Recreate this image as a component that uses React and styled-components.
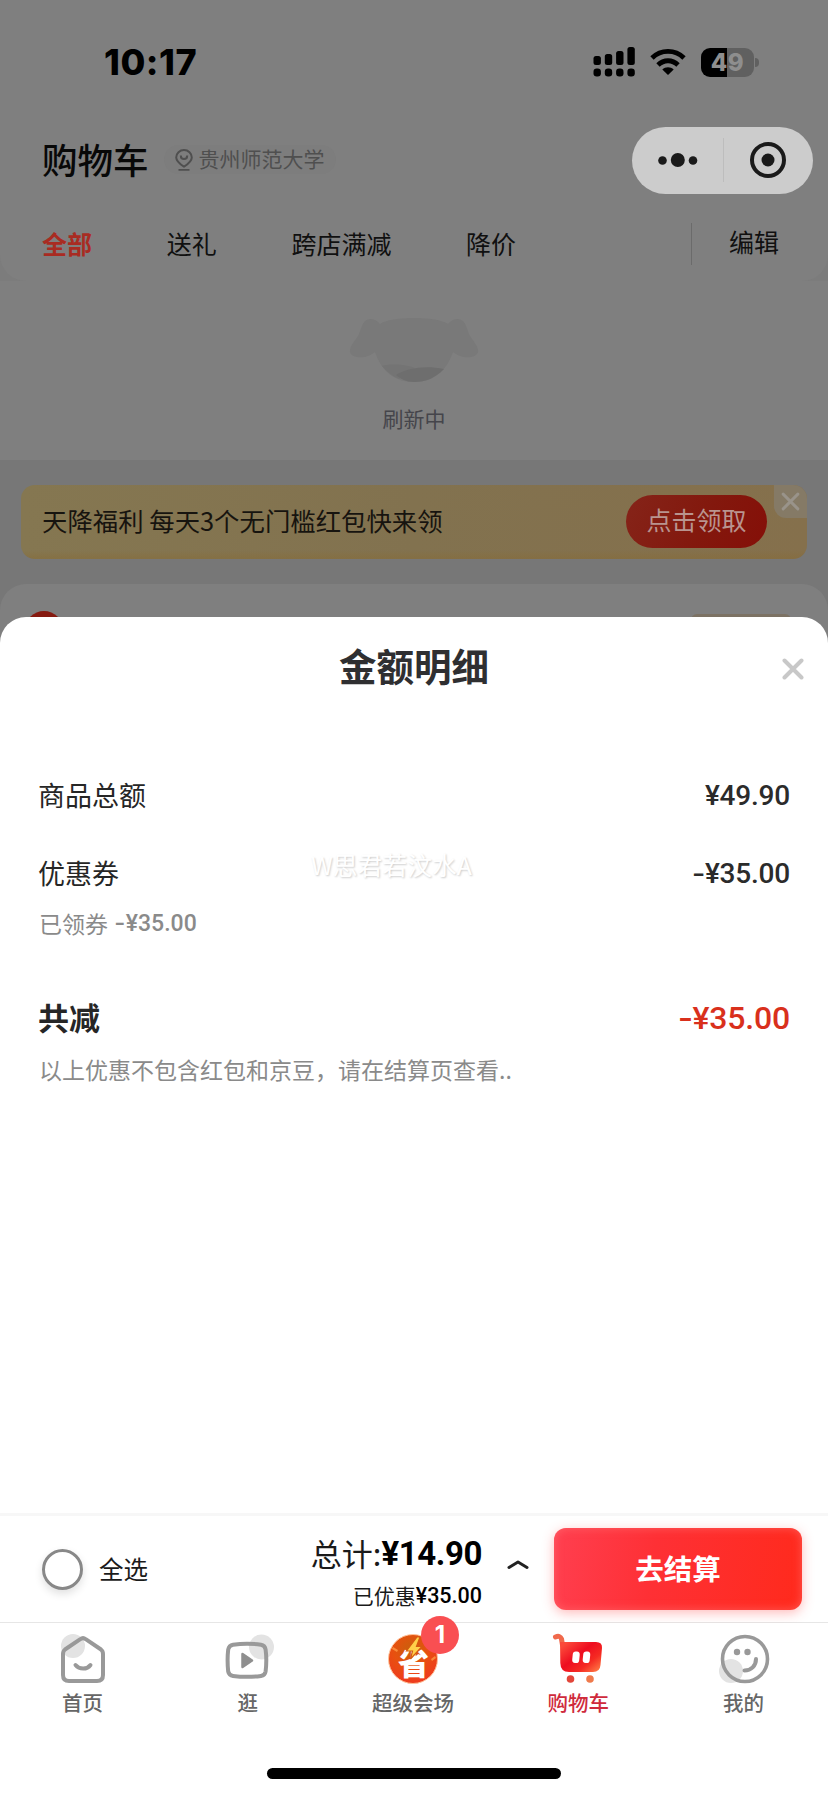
import React from "react";
import styled, { createGlobalStyle } from "styled-components";

const GlobalStyle = createGlobalStyle`
  * {
    box-sizing: border-box;
  }
  body {
    margin: 0;
    background: #fff;
    font-family: "Noto Sans CJK SC", sans-serif;
  }
`

const Screen = styled.div`
  width: 828px;
  height: 1796px;
  display: flex;
  flex-direction: column;
  overflow: hidden;
`

/* cart page behind the sheet, colours already dimmed */
const CartPage = styled.div`
  height: 650px;
  flex-shrink: 0;
  display: flex;
  flex-direction: column;
  background: #777;
`

const TopArea = styled.div`
  height: 460px;
  display: flex;
  flex-direction: column;
  background: #7f7f7f;
`

const StatusBar = styled.div`
  height: 127px;
  padding: 40px 69px 0 104px;
  display: flex;
  justify-content: space-between;
  align-items: flex-start;
`

const Time = styled.div`
  font-family: Inter, sans-serif;
  font-size: 36px;
  font-weight: 800;
  line-height: 44px;
  letter-spacing: 0.5px;
`

const StatusIcons = styled.div`
  height: 44px;
  display: flex;
  align-items: center;
  gap: 15px;
`

const Battery = styled.div`
  display: flex;
  align-items: center;
  gap: 1px;
`

const BatteryBody = styled.div`
  width: 53px;
  height: 29px;
  border-radius: 9px;
  background: linear-gradient(90deg, #000 49%, #606060 49%);
  font-family: Inter, sans-serif;
  font-size: 24px;
  font-weight: 800;
  line-height: 30px;
  text-align: center;
  letter-spacing: 0.5px;
  color: #8e8e8e;
`

const BatteryTip = styled.div`
  width: 4px;
  height: 9px;
  border-radius: 0 4px 4px 0;
  background: #606060;
`

const TitleRow = styled.div`
  height: 67px;
  padding: 0 15px 0 42px;
  display: flex;
  align-items: center;
`

const PageTitle = styled.div`
  padding-bottom: 4px;
  font-size: 35.5px;
  font-weight: 500;
  line-height: 62px;
  color: #080808;
`

const Address = styled.div`
  height: 29px;
  margin: 0 auto 2px 15px;
  padding: 0 11px 0 11px;
  display: flex;
  align-items: center;
  gap: 6px;
  border-radius: 15px;
  background: #7d7d7d;
  font-size: 21px;
  line-height: 25px;
  color: #4f4f4f;
`

const AddressText = styled.div`
  padding-bottom: 3px;
`

const Capsule = styled.div`
  width: 181px;
  height: 67px;
  display: flex;
  align-items: center;
  border-radius: 34px;
  background: #ccc;
`

/* grey page shows through under the rounded corners of this row */
const FilterWrap = styled.div`
  background: #7c7c7c;
`

const FilterRow = styled.div`
  height: 87px;
  padding: 11px 48px 0 42px;
  display: flex;
  align-items: center;
  gap: 74.7px;
  border-radius: 0 0 26px 26px;
  background: #7f7f7f;
`

const Filter = styled.div`
  font-size: 25px;
  font-weight: ${(props) => (props.$active ? 700 : 400)};
  line-height: 36px;
  color: ${(props) => (props.$active ? "#a92b22" : "#101010")};
`

const Edit = styled.div`
  height: 42px;
  margin: 2px 0 0 auto;
  padding-left: 37px;
  padding-right: 1px;
  border-left: 1px solid #6b6b6b;
  font-size: 25px;
  line-height: 37px;
  color: #101010;
`

const Refresh = styled.div`
  flex: 1;
  padding-top: 36px;
  display: flex;
  flex-direction: column;
  align-items: center;
  gap: 19px;
  font-size: 21px;
  line-height: 32px;
  color: #45454b;
`

const Banner = styled.div`
  height: 74px;
  margin: 25px 21px 0 21px;
  padding-left: 21px;
  display: flex;
  justify-content: space-between;
  border-radius: 14px;
  background: linear-gradient(180deg, transparent 88%, rgba(134, 108, 58, 0.5) 98%),
    linear-gradient(90deg, #857751 0%, #82724f 50%, #85704c 100%);
  font-size: 25.4px;
  line-height: 71px;
  color: #17140f;
`

const BannerRight = styled.div`
  display: flex;
  gap: 7px;
`

const ClaimButton = styled.div`
  width: 141px;
  height: 53px;
  margin-top: 10px;
  border-radius: 27px;
  background: linear-gradient(115deg, #852419 0%, #83180d 55%, #850f08 100%);
  text-align: center;
  font-size: 25px;
  line-height: 49px;
  color: #b9948f;
`

const BannerClose = styled.div`
  width: 33px;
  height: 33px;
  display: flex;
  align-items: center;
  justify-content: center;
  border-radius: 0 14px 0 12px;
  background: #857a66;
`

const ShopCard = styled.div`
  flex: 1;
  margin-top: 25px;
  padding: 27px 37px 0 25px;
  display: flex;
  justify-content: space-between;
  border-radius: 26px 26px 0 0;
  background: #7f7f7f;
`

const ShopLogo = styled.div`
  width: 38px;
  height: 38px;
  border-radius: 50%;
  background: #861a10;
`

const ShopCoupon = styled.div`
  width: 100px;
  height: 30px;
  margin-top: 3px;
  border-radius: 6px;
  background: #7c7264;
`

const Sheet = styled.div`
  height: 896px;
  margin-top: -33px;
  flex-shrink: 0;
  position: relative;
  border-radius: 26px 26px 0 0;
  background: #fff;
`

const SheetHeader = styled.div`
  height: 131px;
  padding: 22px 24px 0 46px;
  display: flex;
  align-items: flex-start;
  justify-content: space-between;
`

const SheetTitle = styled.div`
  flex: 1;
  text-align: center;
  font-size: 37.5px;
  font-weight: 700;
  line-height: 52px;
  color: #2f2f31;
`

const CloseButton = styled.div`
  padding-top: 19px;
  line-height: 0;
`

const Line = styled.div`
  height: ${(props) => props.$height}px;
  margin-top: ${(props) => props.$top || 0}px;
  padding: 0 38px;
  display: flex;
  align-items: center;
  justify-content: space-between;
`

const Label = styled.div`
  font-size: ${(props) => (props.$total ? 31 : 27)}px;
  font-weight: ${(props) => (props.$total ? 700 : 400)};
  line-height: 40px;
  color: #262626;
`

const Price = styled.div`
  padding-top: 2px;
  font-family: Roboto, sans-serif;
  font-size: ${(props) => (props.$total ? 32 : 28)}px;
  font-weight: 500;
  line-height: 40px;
  letter-spacing: -0.2px;
  color: ${(props) => (props.$total ? "#d9301c" : "#2b2b2b")};
`

/* plain hyphen, stretched to the width of a minus */
const Minus = styled.span`
  display: inline-block;
  margin-right: 2px;
  transform: scaleX(1.3);
`

const Note = styled.div`
  height: 40px;
  padding: 0 39px;
  display: flex;
  gap: 8px;
  font-size: 23px;
  line-height: 38px;
  color: #8a8a8a;
`

const NotePrice = styled.span`
  font-family: Roboto, sans-serif;
  font-weight: 500;
  line-height: 40px;
`

const Watermark = styled.div`
  position: absolute;
  left: 311px;
  top: 229px;
  font-size: 24.8px;
  line-height: 36px;
  color: #fff;
  text-shadow: 1px 1px 2px rgba(0, 0, 0, 0.2);
`

const CheckoutBar = styled.div`
  height: 110px;
  flex-shrink: 0;
  padding: 0 26px 0 42px;
  display: flex;
  align-items: center;
  border-top: 3px solid #f7f7f7;
  border-bottom: 1px solid #e6e6e6;
  background: #fff;
`

const Radio = styled.div`
  width: 41px;
  height: 41px;
  border: 3px solid #888;
  border-radius: 50%;
  box-shadow: 0 4px 8px rgba(0, 0, 0, 0.12);
`

const SelectAll = styled.div`
  margin: 0 auto 0 16px;
  font-size: 24.5px;
  line-height: 38px;
  color: #1a1a1a;
`

const Totals = styled.div`
  padding-top: 3px;
  display: flex;
  flex-direction: column;
  align-items: flex-end;
`

const TotalLine = styled.div`
  display: flex;
  align-items: center;
  font-size: ${(props) => (props.$small ? 21 : 31)}px;
  line-height: ${(props) => (props.$small ? 34 : 46)}px;
  color: #1a1a1a;
`

const TotalPrice = styled.span`
  padding-top: 2px;
  font-family: Roboto, sans-serif;
  font-size: ${(props) => (props.$small ? 21.5 : 33)}px;
  font-weight: ${(props) => (props.$small ? 500 : 700)};
  letter-spacing: ${(props) => (props.$small ? 0 : -0.4)}px;
  color: #000;
`

const CheckoutButton = styled.div`
  width: 248px;
  height: 82px;
  border-radius: 12px;
  background: linear-gradient(100deg, #ff3f50 0%, #fe3035 40%, #ff2a1c 100%);
  box-shadow: 0 3px 12px rgba(255, 60, 60, 0.35), inset 0 0 10px rgba(255, 120, 120, 0.6);
  font-size: 28.5px;
  font-weight: 700;
  line-height: 79px;
  text-align: center;
  color: #fff;
`

const Chevron = styled.svg`
  margin: 0 25px 10px 25px;
`

const NavBar = styled.div`
  height: 145px;
  padding-right: 2px;
  flex-shrink: 0;
  display: flex;
  background: #fff;
`

const NavItem = styled.div`
  flex: 1;
  padding-top: 9px;
  display: flex;
  flex-direction: column;
  align-items: center;
  font-size: 20.5px;
  line-height: 32px;
  font-weight: 500;
  color: ${(props) => (props.$active ? "#cf2b3c" : "#666")};
`

const IconBox = styled.div`
  position: relative;
  height: 54px;
`

const Badge = styled.div`
  position: absolute;
  left: 35px;
  top: -16px;
  width: 38px;
  height: 38px;
  border-radius: 50%;
  background: #f94f52;
  font-family: Inter, sans-serif;
  font-size: 24px;
  font-weight: 700;
  line-height: 38px;
  text-align: center;
  color: #fff;
`

const HomeIndicator = styled.div`
  width: 294px;
  height: 11px;
  margin: 0 auto;
  flex-shrink: 0;
  border-radius: 6px;
  background: #000;
`

const Signal = () => (
  <svg width="42" height="30" viewBox="0 0 42 30">
    {[9, 11, 14, 18].map((h, i) => (
      <g key={i}>
        <rect x={0.5 + i * 11.3} y={18 - h} width="7.4" height={h} rx="2.5" />
        <rect x={0.5 + i * 11.3} y="21.5" width="7.4" height="8" rx="3.2" />
      </g>
    ))}
  </svg>
)

const Wifi = () => (
  <svg width="36" height="28" viewBox="0 0 36 28" fill="none" stroke="#000" strokeWidth="4.8">
    <path d="M2 10C11 1.2 25 1.2 34 10" />
    <path d="M8 17C13.800 11.300 22.200 11.300 28 17" />
    <path d="M18 27L12.300 21.600C15.400 18.600 20.600 18.600 23.700 21.600Z" fill="#000" stroke="none" />
  </svg>
)

const PinIcon = () => (
  <svg width="18" height="22" viewBox="0 0 18 22" fill="none" stroke="#4f4f4f" strokeWidth="2">
    <path d="M9 17.600C5 15 1.200 12.300 1.200 8.400a7.800 7.400 0 0 1 15.600 0C16.800 12.300 13 15 9 17.600Z" />
    <path d="M5.800 6.500c0 4.800 6.400 4.800 6.400 0" />
    <path d="M3.500 20.900h11" strokeWidth="1.700" />
  </svg>
)

const CapsuleIcons = () => (
  <svg width="181" height="67" viewBox="0 0 181 67" fill="#1a1a1a">
    <circle cx="30.500" cy="33.500" r="4.300" />
    <circle cx="45.800" cy="33" r="7" />
    <circle cx="61" cy="33.500" r="4.300" />
    <rect x="91" y="11" width="1" height="44" fill="#bdbdbd" />
    <circle cx="136" cy="33" r="16" fill="none" stroke="#1a1a1a" strokeWidth="4" />
    <circle cx="136" cy="33" r="6.500" />
  </svg>
)

const DogIcon = () => (
  <svg width="130" height="66" viewBox="0 0 130 66">
    <path
      fill="#797979"
      d="M31 7C42-1 88-1 99 7C104 1 110 1 114 4C117 7 118 12 120 17C123 23 128 27 129 33C130 39 122 41 114 40C110 39 107 37 104 35C97 55 84 65 65 65C46 65 33 55 26 35C23 37 20 39 16 40C8 41 0 39 1 33C2 27 7 23 10 17C12 12 13 7 16 4C20 1 26 1 31 7Z"
    />
    <path fill="#747474" d="M33 49C44 46 58 48 66 51L50 62C43 59 37 54 33 49Z" />
    <path fill="#6e6e6e" d="M47 58C58 51 76 48 95 52C86 61 77 65 65 65C57 65 52 62 47 58Z" />
  </svg>
)

const CloseIcon = ({ size, color, width }) => (
  <svg width={size} height={size} viewBox="0 0 22 22" stroke={color} strokeWidth={width} strokeLinecap="round">
    <path d="M2.500 2.500L19.500 19.500M19.500 2.500L2.500 19.500" />
  </svg>
)

const HomeIcon = () => (
  <svg width="54" height="54" viewBox="0 0 54 54" fill="none" stroke="#999" strokeWidth="4" strokeLinejoin="round" strokeLinecap="round">
    <circle cx="17" cy="14" r="12" fill="#e3e3e3" stroke="none" />
    <path d="M24.300 7.200Q27 5 29.700 7.200L45 17.500Q47 19 47 22V43Q47 49 41 49H13Q7 49 7 43V22Q7 19 9 17.500Z" />
    <path d="M19.500 33C23.500 37.800 31 37.800 34.500 33" />
  </svg>
)

const VideoIcon = () => (
  <svg width="54" height="54" viewBox="0 0 54 54" fill="none">
    <circle cx="40.500" cy="15" r="12.500" fill="#e3e3e3" />
    <path
      stroke="#999"
      strokeWidth="4"
      d="M12 12.700Q26 10.700 40 12.700Q44 13.300 44.600 17.500Q46 28 44.600 39.500Q44 43.300 40 43.900Q26 45.700 12 43.900Q8 43.300 7.200 39.500Q6 28 7.200 17.500Q8 13.300 12 12.700Z"
    />
    <path d="M21.500 22L31 28.500L21.500 35Z" fill="#8f8f8f" stroke="#8f8f8f" strokeWidth="2.500" strokeLinejoin="round" />
  </svg>
)

const SaveIcon = () => (
  <svg width="54" height="54" viewBox="0 0 54 54">
    <defs>
      <radialGradient id="save" cx="0.45" cy="0.3" r="0.7">
        <stop offset="0" stopColor="#c9600c" />
        <stop offset="0.5" stopColor="#e8500f" />
        <stop offset="1" stopColor="#ef3b1e" />
      </radialGradient>
    </defs>
    <circle cx="27" cy="27" r="24.500" fill="url(#save)" stroke="#ffc39a" strokeWidth="1" />
    <path d="M7 15l5 3-1 2-5-3zM45 27l4-3 1 2-4 3z" fill="#f98a3a" />
    <text x="27.500" y="42.500" textAnchor="middle" fontSize="31" fontWeight="900" fill="#fff">省</text>
    <path d="M31 5L20.500 19H26.500L24.500 27L36 14.500H30.500L34 5Z" fill="#ffd04a" stroke="#d65a10" strokeWidth="1.200" />
  </svg>
)

const CartIcon = () => (
  <svg width="54" height="54" viewBox="0 0 54 54">
    <defs>
      <linearGradient id="cart" x1="0" y1="0.2" x2="0.9" y2="1">
        <stop offset="0" stopColor="#fb4a3a" />
        <stop offset="0.4" stopColor="#ee0d20" />
        <stop offset="0.7" stopColor="#f52a22" />
        <stop offset="1" stopColor="#ff7a45" />
      </linearGradient>
    </defs>
    <path d="M4.500 5Q9 3 10.500 7L11.500 13" fill="none" stroke="#f0694c" strokeWidth="5" strokeLinecap="round" />
    <path d="M9 10H45Q51.500 10 51 16L49.500 33Q49 40 42 40H18Q9.500 40 9.300 31Z" fill="url(#cart)" />
    <rect x="21.500" y="19.500" width="7" height="11.500" rx="3.200" fill="#fff" transform="rotate(6 25 25)" />
    <rect x="32" y="19.500" width="7" height="11.500" rx="3.200" fill="#fff" transform="rotate(6 35.500 25)" />
    <circle cx="19.500" cy="47" r="3.800" fill="#e2463a" />
    <circle cx="39" cy="47" r="3.800" fill="#ef7a4c" />
  </svg>
)

const SmileIcon = () => (
  <svg width="54" height="54" viewBox="0 0 54 54" fill="none">
    <circle cx="15" cy="39" r="12" fill="#e3e3e3" />
    <circle cx="29" cy="27" r="22.500" stroke="#999" strokeWidth="3.600" />
    <circle cx="21" cy="20" r="3.200" fill="#999" />
    <circle cx="31.500" cy="20" r="3.200" fill="#999" />
    <path d="M40 27C40 34 35 38.500 28.500 38.500" stroke="#999" strokeWidth="4" strokeLinecap="round" />
  </svg>
)

const filters = ["全部", "送礼", "跨店满减", "降价"]

const tabs = [
  { name: "首页", icon: <HomeIcon /> },
  { name: "逛", icon: <VideoIcon /> },
  { name: "超级会场", icon: <SaveIcon />, badge: 1 },
  { name: "购物车", icon: <CartIcon />, active: true },
  { name: "我的", icon: <SmileIcon /> },
]

const App = () => {
  return (
    <Screen>
      <GlobalStyle />
      <CartPage>
        <TopArea>
          <StatusBar>
            <Time>10:17</Time>
            <StatusIcons>
              <Signal />
              <Wifi />
              <Battery>
                <BatteryBody>49</BatteryBody>
                <BatteryTip />
              </Battery>
            </StatusIcons>
          </StatusBar>
          <TitleRow>
            <PageTitle>购物车</PageTitle>
            <Address>
              <PinIcon />
              <AddressText>贵州师范大学</AddressText>
            </Address>
            <Capsule>
              <CapsuleIcons />
            </Capsule>
          </TitleRow>
          <FilterWrap>
            <FilterRow>
              {filters.map((name, index) => (
                <Filter key={name} $active={index === 0}>{name}</Filter>
              ))}
              <Edit>编辑</Edit>
            </FilterRow>
          </FilterWrap>
          <Refresh>
            <DogIcon />
            <div>刷新中</div>
          </Refresh>
        </TopArea>
        <Banner>
          <div>天降福利 每天3个无门槛红包快来领</div>
          <BannerRight>
            <ClaimButton>点击领取</ClaimButton>
            <BannerClose>
              <CloseIcon size={19} color="#99938a" width={3.4} />
            </BannerClose>
          </BannerRight>
        </Banner>
        <ShopCard>
          <ShopLogo />
          <ShopCoupon />
        </ShopCard>
      </CartPage>

      <Sheet>
        <SheetHeader>
          <SheetTitle>金额明细</SheetTitle>
          <CloseButton>
            <CloseIcon size={22} color="#c8c8c8" width={4} />
          </CloseButton>
        </SheetHeader>
        <Line $height={94}>
          <Label>商品总额</Label>
          <Price>¥49.90</Price>
        </Line>
        <Line $height={62}>
          <Label>优惠券</Label>
          <Price><Minus>-</Minus>¥35.00</Price>
        </Line>
        <Note>
          已领券
          <NotePrice><Minus>-</Minus>¥35.00</NotePrice>
        </Note>
        <Line $height={66} $top={40}>
          <Label $total>共减</Label>
          <Price $total><Minus>-</Minus>¥35.00</Price>
        </Line>
        <Note>以上优惠不包含红包和京豆，请在结算页查看..</Note>
        <Watermark>W思君若汶水A</Watermark>
      </Sheet>

      <CheckoutBar>
        <Radio />
        <SelectAll>全选</SelectAll>
        <Totals>
          <TotalLine>
            总计:<TotalPrice>¥14.90</TotalPrice>
          </TotalLine>
          <TotalLine $small>
            已优惠<TotalPrice $small>¥35.00</TotalPrice>
          </TotalLine>
        </Totals>
        <Chevron width="22" height="11" viewBox="0 0 22 11" fill="none" stroke="#222" strokeWidth="3" strokeLinecap="round" strokeLinejoin="round">
          <path d="M2 8.500L11 3L20 8.500" />
        </Chevron>
        <CheckoutButton>去结算</CheckoutButton>
      </CheckoutBar>

      <NavBar>
        {tabs.map((tab) => (
          <NavItem key={tab.name} $active={tab.active}>
            <IconBox>
              {tab.icon}
              {tab.badge ? <Badge>{tab.badge}</Badge> : null}
            </IconBox>
            {tab.name}
          </NavItem>
        ))}
      </NavBar>
      <HomeIndicator />
    </Screen>
  );
}

export default App;
